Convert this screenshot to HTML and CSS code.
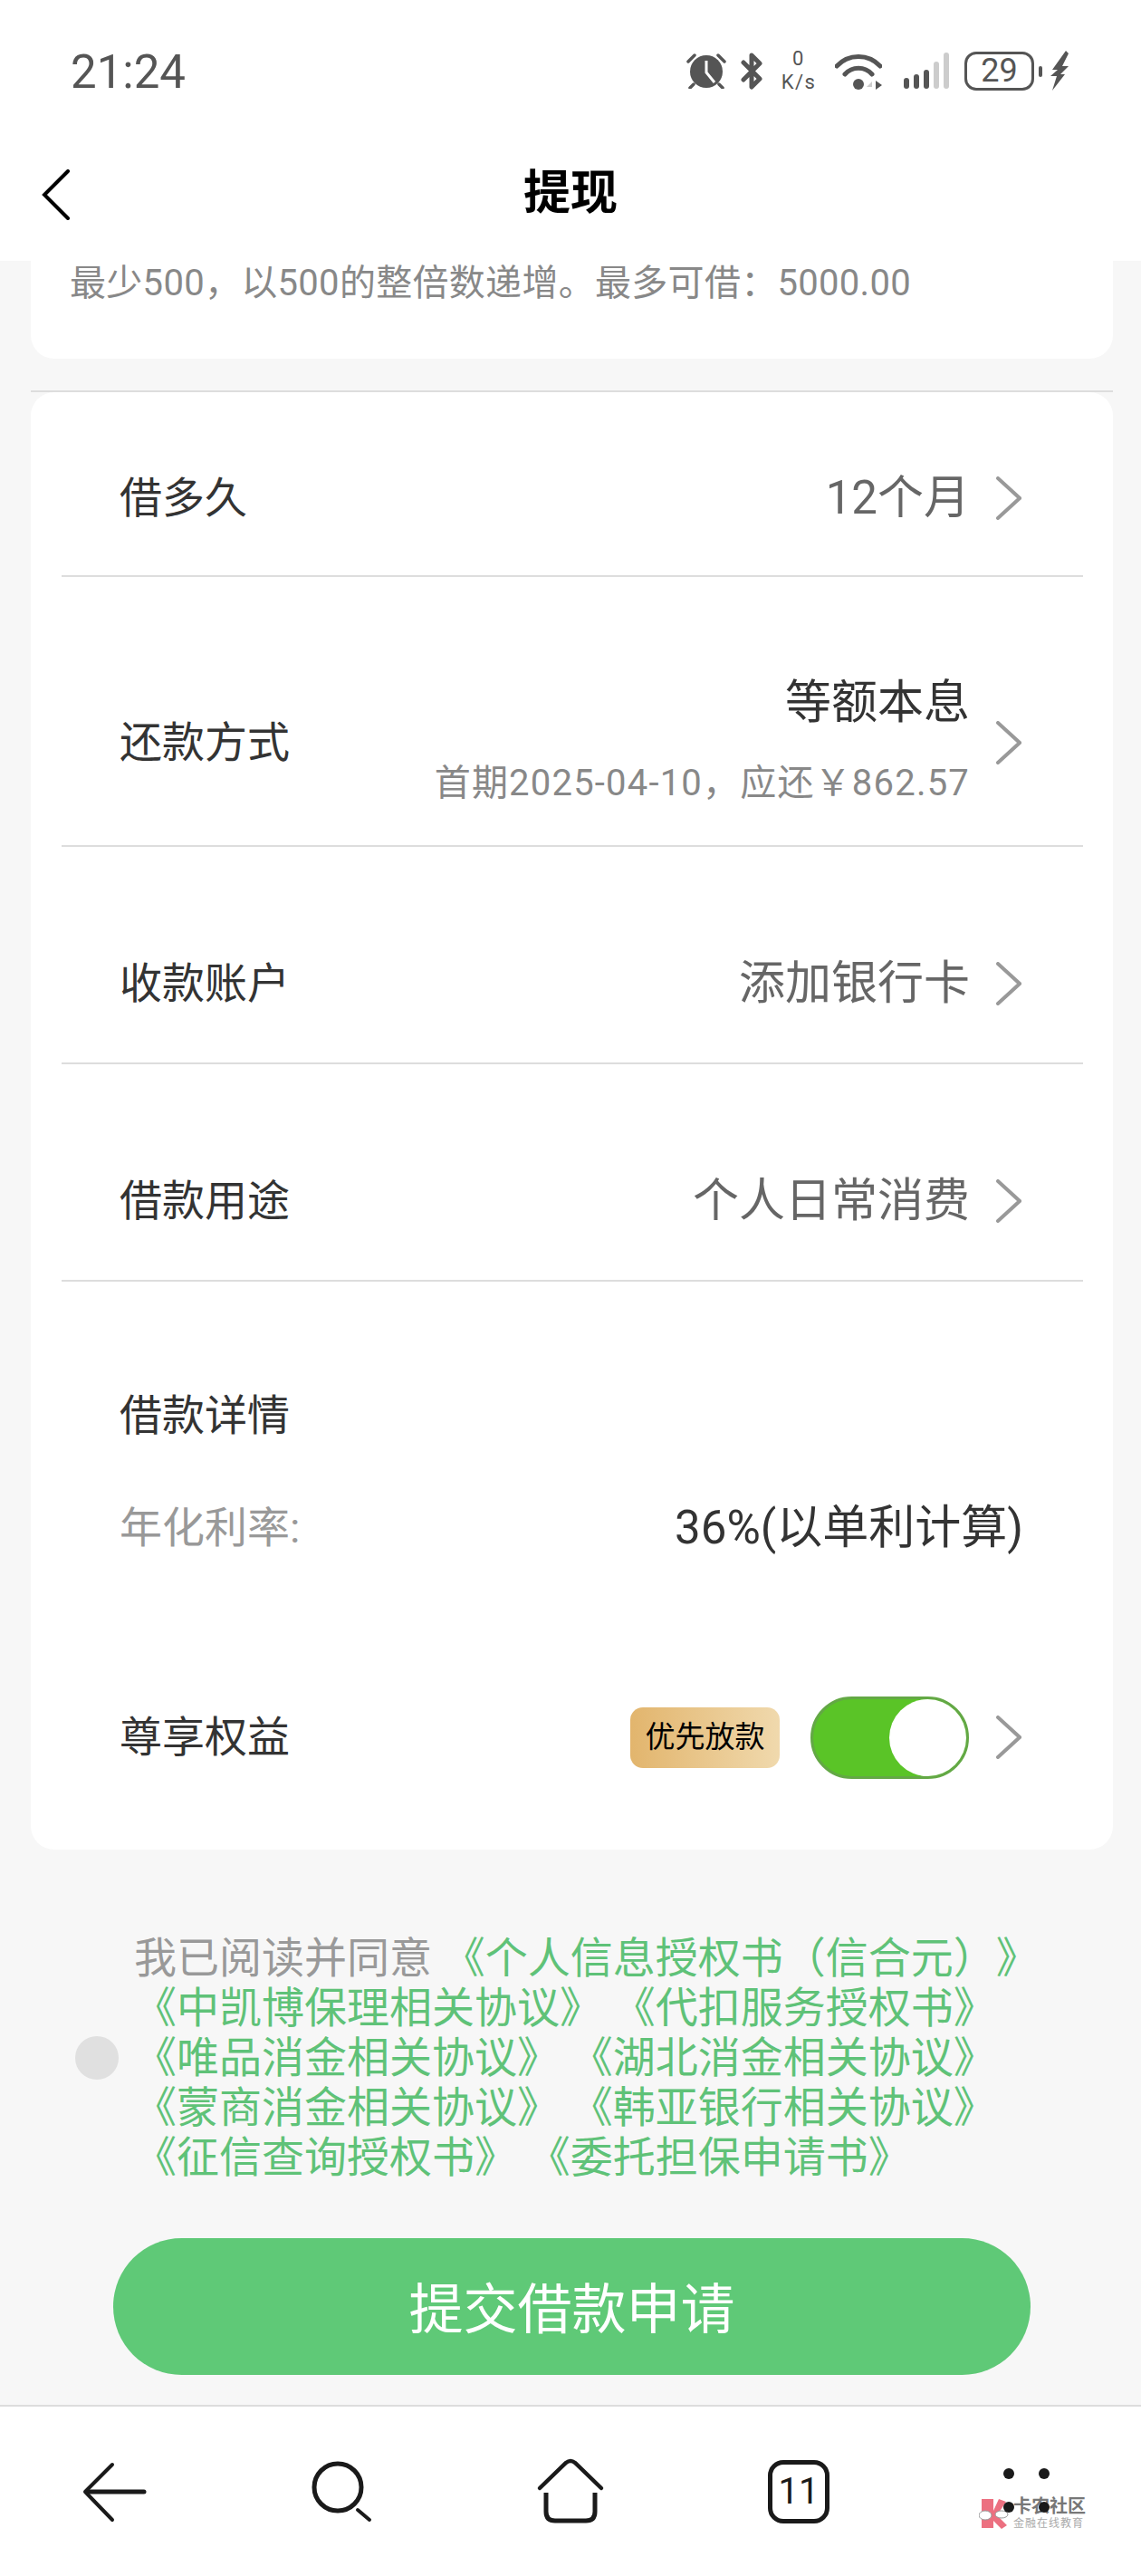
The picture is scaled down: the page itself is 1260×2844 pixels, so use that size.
FILE: index.html
```html
<!DOCTYPE html>
<html lang="zh-CN">
<head>
    <meta charset="UTF-8">
    <meta name="viewport" content="width=device-width, initial-scale=1.0">
    <title>提现</title>
    <link rel="stylesheet" href="styles.css">
</head>
<body>
    <header class="status-bar">
        <span class="clock">21:24</span>
        <div class="status-icons">
            <svg class="icon-alarm" viewBox="0 0 44 40">
                <circle cx="22" cy="21" r="18" fill="#555"/>
                <path d="M22 9V22L31 33" fill="none" stroke="#fff" stroke-width="3"/>
                <path d="M2 10L9 3M35 3L42 10M8 35L4 39M36 35L40 39" fill="none" stroke="#555" stroke-width="3.5" stroke-linecap="round"/>
            </svg>
            <svg class="icon-bt" viewBox="0 0 25 41">
                <path d="M3 11L21 29L12 38V3L21 12L3 30" fill="none" stroke="#555" stroke-width="5" stroke-linejoin="round" stroke-linecap="round"/>
            </svg>
            <div class="net-speed"><span>0</span><span>K/s</span></div>
            <svg class="icon-wifi" viewBox="0 0 52 41">
                <path d="M2 15C15 1 37 1 50 15M11 24C19 15 33 15 41 24" fill="none" stroke="#555" stroke-width="5" stroke-linecap="round"/>
                <circle cx="26" cy="35" r="6" fill="#555"/>
                <path d="M35 38L41 32V38Z" fill="#ccc"/>
                <path d="M45 31L52 36L45 41Z" fill="#555"/>
            </svg>
            <div class="signal">
                <i class="bar h20"></i><i class="bar h24"></i><i class="bar h29"></i><i class="bar off h38"></i><i class="bar off h48"></i>
            </div>
            <div class="battery"><span class="battery-level">29</span><i class="battery-nub"></i></div>
            <svg class="icon-bolt" viewBox="0 0 20 44">
                <path d="M17 0L2 21H8L0 28H7L2 44L16 26H11L20 17H13L20 3Z" fill="#555"/>
            </svg>
        </div>
    </header>

    <div class="nav-bar">
        <svg class="nav-back" viewBox="0 0 32 56">
            <path d="M29 2L3 28L29 54" fill="none" stroke="#000" stroke-width="4" stroke-linecap="round"/>
        </svg>
        <h1>提现</h1>
    </div>

    <main class="content">
        <section class="amount-card">
            <p>最少500，以500的整倍数递增。最多可借：5000.00</p>
        </section>
        <hr class="card-line">

        <section class="form-card">
            <div class="row row-first">
                <span class="row-label">借多久</span>
                <span class="row-value">12个月</span>
                <svg class="chevron" viewBox="0 0 28 48"><path d="M2 2L26 24L2 46"/></svg>
            </div>
            <div class="row row-double">
                <span class="row-label">还款方式</span>
                <div class="row-stack">
                    <span class="row-value dark">等额本息</span>
                    <span class="row-sub">首期2025-04-10，应还￥862.57</span>
                </div>
                <svg class="chevron" viewBox="0 0 28 48"><path d="M2 2L26 24L2 46"/></svg>
            </div>
            <div class="row">
                <span class="row-label">收款账户</span>
                <span class="row-value">添加银行卡</span>
                <svg class="chevron" viewBox="0 0 28 48"><path d="M2 2L26 24L2 46"/></svg>
            </div>
            <div class="row">
                <span class="row-label">借款用途</span>
                <span class="row-value">个人日常消费</span>
                <svg class="chevron" viewBox="0 0 28 48"><path d="M2 2L26 24L2 46"/></svg>
            </div>

            <div class="details">
                <div class="row-label">借款详情</div>
                <div class="rate-line">
                    <span class="rate-label">年化利率:</span>
                    <span class="rate-value">36%(以单利计算)</span>
                </div>
                <div class="perk-line">
                    <span class="row-label">尊享权益</span>
                    <span class="perk-badge">优先放款</span>
                    <div class="toggle"><i class="toggle-knob"></i></div>
                    <svg class="chevron" viewBox="0 0 28 48"><path d="M2 2L26 24L2 46"/></svg>
                </div>
            </div>
        </section>

        <section class="agree">
            <i class="agree-check"></i>
            <p class="agree-text">我已阅读并同意 <a>《个人信息授权书（信合元）》</a><br>
                <a>《中凯博保理相关协议》</a> <a>《代扣服务授权书》</a><br>
                <a>《唯品消金相关协议》</a> <a>《湖北消金相关协议》</a><br>
                <a>《蒙商消金相关协议》</a> <a>《韩亚银行相关协议》</a><br>
                <a>《征信查询授权书》</a> <a>《委托担保申请书》</a>
            </p>
        </section>

        <button class="submit-btn" type="button">提交借款申请</button>
    </main>

    <footer class="browser-bar">
        <svg class="tool" viewBox="0 0 80 80">
            <path d="M73 40H10" fill="none" stroke="#1a1a1a" stroke-width="5" stroke-linecap="round"/>
            <path d="M38 10L8 40L38 71" fill="none" stroke="#1a1a1a" stroke-width="4" stroke-linecap="round" stroke-linejoin="round"/>
        </svg>
        <svg class="tool" viewBox="0 0 80 80">
            <circle cx="35" cy="35" r="26" fill="none" stroke="#1a1a1a" stroke-width="5"/>
            <path d="M57 60L70 71" fill="none" stroke="#1a1a1a" stroke-width="4" stroke-linecap="round"/>
        </svg>
        <svg class="tool" viewBox="0 0 80 80">
            <path d="M6 36L35 8Q40 4 45 8L74 36" fill="none" stroke="#1a1a1a" stroke-width="4.5" stroke-linecap="round"/>
            <path d="M13 41V62Q13 72 23 72H57Q67 72 67 62V41" fill="none" stroke="#1a1a1a" stroke-width="5"/>
        </svg>
        <div class="tool tab-count">11</div>
        <svg class="tool tool-more" viewBox="0 0 80 80">
            <circle cx="20" cy="20" r="6" fill="#1a1a1a"/>
            <circle cx="59" cy="20" r="6" fill="#1a1a1a"/>
            <circle cx="20" cy="57" r="6" fill="#1a1a1a"/>
            <circle cx="59" cy="57" r="6" fill="#1a1a1a"/>
        </svg>

        <div class="forum-mark">
            <svg class="forum-logo" viewBox="0 0 34 36">
                <path d="M3 2H16V34H3Z" fill="#ec7080"/>
                <path d="M16 15L22 2L30 5L20 20L31 31L25 35L16 26Z" fill="#ec7080"/>
                <ellipse cx="7" cy="20" rx="7" ry="5" fill="#fff" stroke="#999"/>
                <ellipse cx="25" cy="19" rx="7" ry="4" fill="#fff" stroke="#999"/>
            </svg>
            <div class="forum-name">
                <b>卡农社区</b>
                <small>金融在线教育</small>
            </div>
        </div>
    </footer>
</body>
</html>
```

FILE: styles.css
```css
* {
  box-sizing: border-box;
}
body {
  margin: 0;
  height: 2844px;
  display: flex;
  flex-direction: column;
  font-family: Roboto, "Noto Sans CJK SC", sans-serif;
  text-spacing-trim: space-all;
  background-color: #fff;
  color: #333;
}

/* Status bar */
.status-bar {
  height: 144px;
  padding: 56px 80px 0 78px;
  display: flex;
  justify-content: space-between;
  align-items: flex-start;
  color: #555;
}
.clock {
  font-size: 51px;
  line-height: 48px;
  font-weight: 400;
}
.status-icons {
  display: flex;
  align-items: center;
  height: 44px;
}
.icon-alarm {
  width: 44px;
  height: 40px;
}
.icon-bt {
  width: 25px;
  height: 41px;
  margin-left: 16px;
}
.net-speed {
  width: 42px;
  margin-left: 18px;
  display: flex;
  flex-direction: column;
  align-items: center;
  font-size: 22px;
  line-height: 26px;
  letter-spacing: 1.5px;
}
.icon-wifi {
  width: 52px;
  height: 41px;
  margin-left: 19px;
}
.signal {
  display: flex;
  align-items: flex-end;
  gap: 5px;
  height: 40px;
  margin-left: 24px;
}
.bar {
  width: 6px;
  border-radius: 3px;
  background-color: #555;
}
.bar.off {
  background-color: #ccc;
}
.h20 { height: 12px; }
.h24 { height: 16px; }
.h29 { height: 21px; }
.h38 { height: 30px; }
.h48 { height: 40px; }
.battery {
  position: relative;
  width: 77px;
  height: 43px;
  margin-left: 17px;
  border: 3px solid #555;
  border-radius: 13px;
  text-align: center;
}
.battery-level {
  font-size: 36px;
  line-height: 37px;
  display: block;
}
.battery-nub {
  position: absolute;
  right: -12px;
  top: 13px;
  width: 4px;
  height: 12px;
  border-radius: 2px;
  background-color: #555;
}
.icon-bolt {
  width: 20px;
  height: 44px;
  margin-left: 18px;
}

/* Title bar */
.nav-bar {
  position: relative;
  height: 144px;
  padding-bottom: 16px;
  display: flex;
  align-items: center;
  justify-content: center;
}
.nav-bar h1 {
  margin: 0;
  font-size: 52px;
  font-weight: 700;
  color: #000;
}
.nav-back {
  position: absolute;
  left: 46px;
  top: 43px;
  width: 32px;
  height: 56px;
}

/* Page body */
.content {
  flex: 1;
  background-color: #f7f7f7;
  display: flex;
  flex-direction: column;
}
.amount-card {
  height: 108px;
  margin: 0 31px 0 34px;
  background-color: #fff;
  border-radius: 0 0 26px 26px;
}
.amount-card p {
  margin: 0;
  padding-left: 43px;
  font-size: 40px;
  line-height: 50px;
  letter-spacing: 0.3px;
  color: #888;
}
.card-line {
  height: 2px;
  margin: 35px 31px 0 34px;
  border: none;
  background-color: #ddd;
}
.form-card {
  height: 1609px;
  margin: 0 31px 0 34px;
  background-color: #fff;
  border-radius: 26px;
}

/* Rows in the form */
.row {
  margin: 0 33px 0 34px;
  padding: 127px 68px 63px 64px;
  display: flex;
  align-items: center;
  border-bottom: 2px solid #ddd;
}
.row-first {
  padding-top: 93px;
  padding-bottom: 61px;
}
.row-double {
  padding-top: 115px;
  padding-bottom: 46px;
}
.row-label {
  font-size: 47px;
  line-height: 48px;
  color: #333;
}
.row-value {
  margin-left: auto;
  font-size: 51px;
  line-height: 48px;
  color: #666;
}
.row-value.dark {
  color: #333;
}
.row-stack {
  margin-left: auto;
  display: flex;
  flex-direction: column;
  align-items: flex-end;
  gap: 43px;
}
.row-sub {
  font-size: 40px;
  line-height: 44px;
  letter-spacing: 1.2px;
  color: #888;
}
.chevron {
  flex: none;
  width: 28px;
  height: 48px;
  margin-left: 29px;
}
.chevron path {
  fill: none;
  stroke: #999;
  stroke-width: 4;
  stroke-linecap: round;
}

/* Loan details block */
.details {
  padding: 124px 99px 0 98px;
}
.rate-line {
  margin-top: 76px;
  display: flex;
  justify-content: space-between;
  align-items: center;
  line-height: 48px;
}
.rate-label {
  font-size: 47px;
  color: #999;
}
.rate-value {
  font-size: 51px;
  color: #333;
}
.perk-line {
  margin-top: 162px;
  display: flex;
  align-items: center;
  height: 90px;
  padding-right: 2px;
}
.perk-badge {
  margin-left: auto;
  width: 165px;
  height: 67px;
  border-radius: 14px;
  background: linear-gradient(90deg, #e2b56d, #f0d9ad);
  font-size: 33px;
  line-height: 65px;
  text-align: center;
  color: #000;
}
.toggle {
  position: relative;
  width: 175px;
  height: 91px;
  margin-left: 34px;
  border: 3px solid #63a845;
  border-radius: 46px;
  background-color: #5ac427;
}
.toggle-knob {
  position: absolute;
  right: 0;
  top: 0;
  width: 85px;
  height: 85px;
  border-radius: 50%;
  background-color: #fff;
}
.perk-line .chevron {
  margin-left: 30px;
}

/* Agreement text */
.agree {
  margin-top: 92px;
  padding-left: 83px;
  display: flex;
  align-items: center;
  gap: 17px;
}
.agree-check {
  flex: none;
  width: 48px;
  height: 48px;
  border-radius: 50%;
  background-color: #e0e0e0;
}
.agree-text {
  margin: 0;
  font-size: 47px;
  line-height: 55px;
  color: #999;
  white-space: nowrap;
}
.agree-text a {
  color: #5fc278;
}
.submit-btn {
  width: 1013px;
  height: 151px;
  margin: 62px 0 0 125px;
  padding-bottom: 6px;
  border: none;
  border-radius: 76px;
  background-color: #5fc977;
  color: #fff;
  font-family: inherit;
  font-size: 60px;
}

/* Browser toolbar */
.browser-bar {
  position: relative;
  height: 189px;
  display: grid;
  grid-template-columns: repeat(5, 252px);
  justify-items: center;
  align-items: center;
  border-top: 2px solid #ddd;
}
.tool {
  width: 80px;
  height: 80px;
}
.tool-more {
  position: relative;
  z-index: 1;
}
.tab-count {
  width: 68px;
  height: 70px;
  border: 5px solid #1a1a1a;
  border-radius: 17px;
  text-align: center;
  font-size: 40px;
  line-height: 60px;
  color: #1a1a1a;
}
.forum-mark {
  position: absolute;
  left: 1081px;
  top: 100px;
  display: flex;
  gap: 4px;
}
.forum-logo {
  width: 34px;
  height: 36px;
}
.forum-name {
  display: flex;
  flex-direction: column;
  line-height: 1;
}
.forum-name b {
  font-size: 20px;
  color: #777;
}
.forum-name small {
  margin-top: 3px;
  font-size: 12px;
  letter-spacing: 1px;
  color: #aaa;
}
```
